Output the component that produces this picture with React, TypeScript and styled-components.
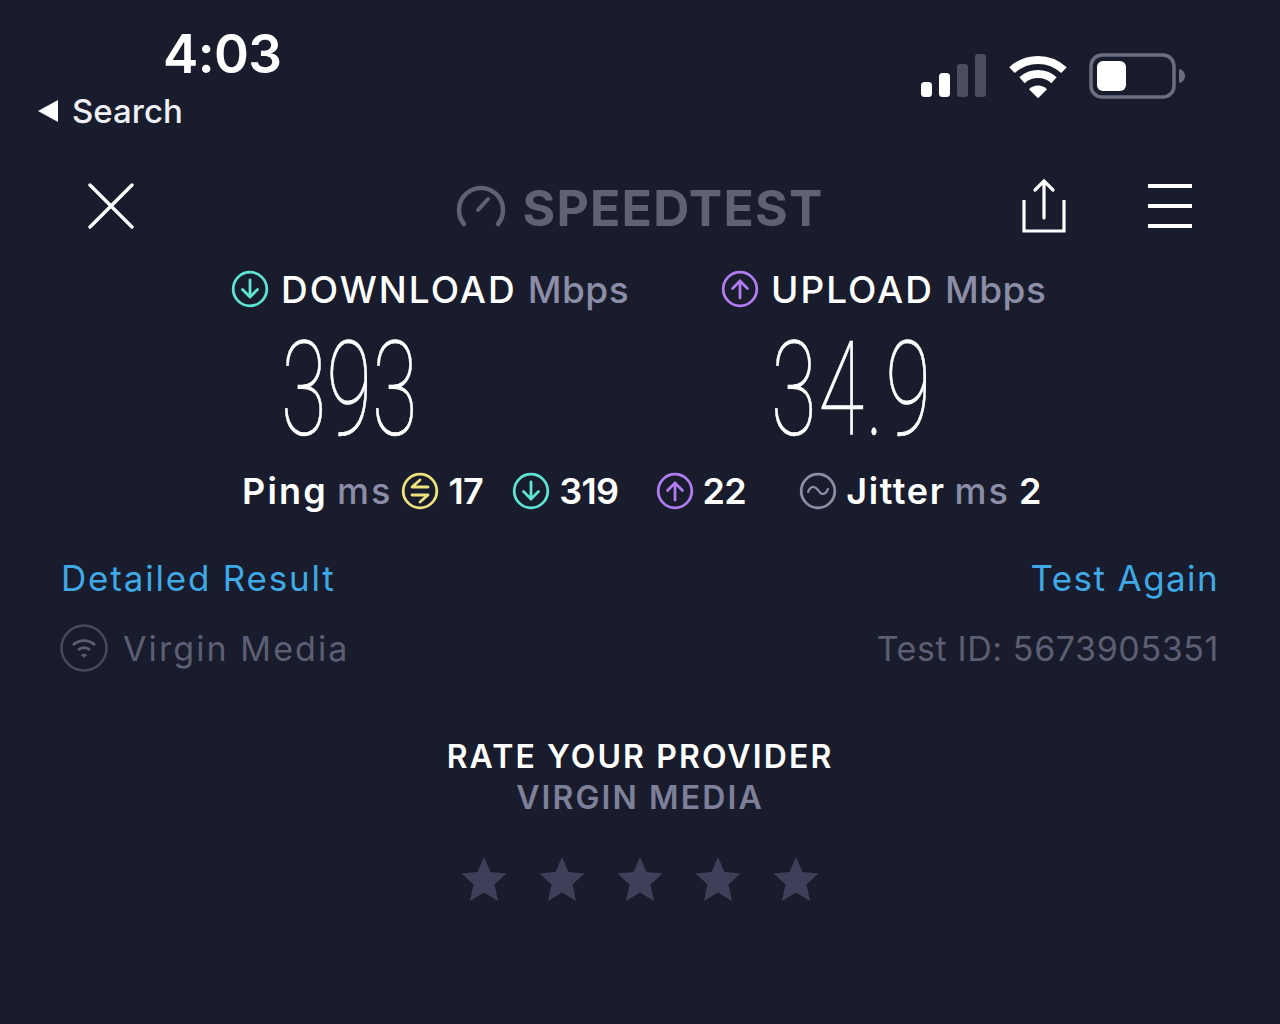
import { ReactNode } from "react";
import styled, { createGlobalStyle } from "styled-components";

const TEAL = "#5fe3d3";
const PURPLE = "#b07cf0";
const YELLOW = "#ede27e";
const MUTED = "#8b8ea6";
const BLUE = "#3fa9e6";
const DIM = "#5c5f73";

const GlobalStyle = createGlobalStyle`
  html, body {
    margin: 0;
    background: #191c2c;
  }
  body {
    font-family: Inter, "Liberation Sans", sans-serif;
    color: #fff;
  }
`;

const Page = styled.main`
  width: 1280px;
  height: 1024px;
  overflow: hidden;
  background: #191c2c;
`;

const StatusBar = styled.header`
  display: flex;
  justify-content: space-between;
  align-items: flex-end;
  height: 135px;
  padding: 0 95px 0 38px;
`;
const StatusLeft = styled.div`
  display: flex;
  flex-direction: column;
  align-self: flex-start;
`;
const Clock = styled.div`
  margin: 24px 0 0 125px;
  font-size: 53px;
  font-weight: 600;
  line-height: 60px;
  letter-spacing: -0.6px;
`;
const BackLink = styled.div`
  display: flex;
  align-items: center;
  gap: 14px;
  height: 47px;
  margin-top: 3px;
  font-size: 33px;
  font-weight: 500;
  color: #eef0f6;
`;
const StatusRight = styled.div`
  display: flex;
  align-items: center;
  gap: 22px;
  margin-bottom: 36px;
`;

const NavBar = styled.nav`
  display: grid;
  grid-template-columns: 1fr auto 1fr;
  align-items: center;
  height: 56px;
  margin-top: 43px;
  padding: 0 88px;
`;
const Logo = styled.div`
  display: flex;
  align-items: center;
  gap: 16px;
  color: #5f6274;
`;
const LogoText = styled.span`
  margin-top: 4px;
  font-size: 50px;
  font-weight: 700;
  line-height: 1;
  letter-spacing: 1.2px;
`;
const NavActions = styled.div`
  display: flex;
  justify-content: flex-end;
  align-items: center;
  gap: 82px;
`;

const Metrics = styled.section`
  display: grid;
  grid-template-columns: 490px auto;
  margin-top: 35px;
  padding-left: 231px;
`;
const Metric = styled.div`
  display: flex;
  flex-direction: column;
`;
const MetricHead = styled.div`
  display: flex;
  align-items: center;
  height: 40px;
  gap: 12px;
  font-size: 37px;
  font-weight: 500;
  letter-spacing: 2px;
`;
const Unit = styled.span`
  margin-left: -1px;
  font-weight: 500;
  letter-spacing: 0.5px;
  color: ${MUTED};
`;
const Reading = styled.div<{ $indent: number; $track?: number }>`
  height: 112px;
  margin: 25px 0 0 ${(p) => p.$indent}px;
  font-family: Roboto, sans-serif;
  font-size: 132px;
  font-weight: 100;
  line-height: 112px;
  letter-spacing: ${(p) => p.$track ?? 0}px;
  white-space: nowrap;
  -webkit-text-stroke: 0.7px #fff;
  transform: scaleX(0.63);
  transform-origin: left center;
`;

const Stats = styled.section`
  display: flex;
  align-items: center;
  height: 40px;
  margin-top: 25px;
  padding-left: 242px;
  font-size: 36px;
  font-weight: 600;
  letter-spacing: -0.6px;
`;
const Stat = styled.div<{ $gap: number }>`
  display: flex;
  align-items: center;
  gap: 9px;
  margin-left: ${(p) => p.$gap}px;
`;
const StatLabel = styled.span<{ $track: number }>`
  letter-spacing: ${(p) => p.$track}px;
`;
const StatUnit = styled.span`
  font-weight: 500;
  letter-spacing: 2px;
  color: ${MUTED};
`;

const InfoRow = styled.div<{ $top: number }>`
  display: flex;
  justify-content: space-between;
  align-items: center;
  height: 48px;
  margin-top: ${(p) => p.$top}px;
  padding: 0 61px;
`;
const TextLink = styled.a<{ $track: number }>`
  font-size: 35px;
  font-weight: 400;
  letter-spacing: ${(p) => p.$track}px;
  color: ${BLUE};
`;
const Provider = styled.div`
  display: flex;
  align-items: center;
  gap: 15px;
  margin-left: -1px;
`;
const FaintText = styled.span<{ $track: number }>`
  font-size: 34px;
  font-weight: 400;
  letter-spacing: ${(p) => p.$track}px;
  color: ${DIM};
`;

const Rating = styled.section`
  display: flex;
  flex-direction: column;
  align-items: center;
  margin-top: 64px;
`;
const RatingTitle = styled.div<{ $muted?: boolean }>`
  font-size: 32px;
  font-weight: 600;
  line-height: 41px;
  letter-spacing: 2.1px;
  color: ${(p) => (p.$muted ? "#7d8098" : "#fff")};
`;
const Stars = styled.div`
  display: flex;
  gap: 32px;
  margin-top: 38px;
`;

const SignalBars = () => (
  <svg width="66" height="44" viewBox="0 0 66 44">
    <rect x="0" y="28" width="11" height="15" rx="3.5" fill="#fff" />
    <rect x="18" y="19" width="11" height="24" rx="3.5" fill="#fff" />
    <rect x="36" y="10" width="11" height="33" rx="3" fill="#4b4e60" />
    <rect x="54" y="0" width="11" height="43" rx="3" fill="#4b4e60" />
  </svg>
);

const WifiIcon = ({ size, color }: { size: number; color: string }) => (
  <svg width={size} height={size * 0.8} viewBox="0 0 58 46">
    <path d="M3 17 A38 38 0 0 1 55 17" fill="none" stroke={color} strokeWidth="8" />
    <path d="M13 27 A24 24 0 0 1 45 27" fill="none" stroke={color} strokeWidth="8" />
    <path d="M20 36 A13 13 0 0 1 38 36 L29 45 Z" fill={color} />
  </svg>
);

const Battery = () => (
  <svg width="96" height="46" viewBox="0 0 96 46">
    <rect x="2" y="2" width="83" height="42" rx="11" fill="none" stroke="#6b6e80" strokeWidth="3.5" />
    <rect x="8" y="8" width="29" height="30" rx="6" fill="#fff" />
    <path d="M90 16 C94 17 96 20 96 23 C96 26 94 29 90 30 Z" fill="#6b6e80" />
  </svg>
);

const CloseIcon = () => (
  <svg width="46" height="46" viewBox="0 0 46 46">
    <path d="M2 2 L44 44 M44 2 L2 44" stroke="#fff" strokeWidth="3.4" strokeLinecap="round" />
  </svg>
);

const GaugeIcon = () => (
  <svg width="50" height="44" viewBox="0 0 50 44" fill="none" stroke="#5f6274" strokeLinecap="round">
    <path d="M8 40 A22 22 0 1 1 42 40" strokeWidth="4.5" />
    <path d="M22 26 L32 15" strokeWidth="4" />
  </svg>
);

const ShareIcon = () => (
  <svg width="44" height="56" viewBox="0 0 44 56" fill="none" stroke="#fff" strokeWidth="3.2">
    <path d="M2 22 V53 H42 V22" />
    <path d="M22 40 V3 M13 12 L22 3 L31 12" strokeLinecap="round" />
  </svg>
);

const MenuIcon = () => (
  <svg width="44" height="44" viewBox="0 0 44 44" fill="#fff">
    <rect y="0" width="44" height="4" />
    <rect y="20" width="44" height="4" />
    <rect y="40" width="44" height="4" />
  </svg>
);

const Ring = ({ color, children }: { color: string; children: ReactNode }) => (
  <svg width="38" height="38" viewBox="0 0 38 38" fill="none" stroke={color} strokeLinecap="round">
    <circle cx="19" cy="19" r="16.8" strokeWidth="2.8" />
    {children}
  </svg>
);

const DownIcon = () => (
  <Ring color={TEAL}>
    <path d="M19 10 V27 M11.5 19.5 L19 27 L26.5 19.5" strokeWidth="2.8" />
  </Ring>
);
const UpIcon = () => (
  <Ring color={PURPLE}>
    <path d="M19 28 V11 M11.5 18.5 L19 11 L26.5 18.5" strokeWidth="2.8" />
  </Ring>
);
const PingIcon = () => (
  <Ring color={YELLOW}>
    <path d="M27 15 H11 L19 8 M11 23 H27 L19 30" strokeWidth="2.8" strokeLinejoin="round" />
  </Ring>
);
const JitterIcon = () => (
  <Ring color={MUTED}>
    <path d="M9 20 C12 13 16 14 19 18 C22 23 26 24 29 17" strokeWidth="2.2" />
  </Ring>
);

const ProviderIcon = () => (
  <svg width="48" height="48" viewBox="0 0 48 48" fill="none" stroke="#474a5d">
    <circle cx="24" cy="24" r="22.5" strokeWidth="2.4" />
    <path d="M13 21 A16 16 0 0 1 35 21 M18 26 A9 9 0 0 1 30 26" strokeWidth="2.8" stroke="#5c5f73" />
    <path d="M21 31 A4 4 0 0 1 27 31 L24 34 Z" fill="#5c5f73" stroke="none" />
  </svg>
);

const Star = () => (
  <svg width="46" height="46" viewBox="0 0 46 46" fill="#3d4058">
    <path d="M23 1 L29.5 16 L45.5 17.5 L33.5 28.5 L37 45 L23 36.5 L9 45 L12.5 28.5 L0.5 17.5 L16.5 16 Z" />
  </svg>
);

export default function App() {
  return (
    <Page>
      <GlobalStyle />
      <StatusBar>
        <StatusLeft>
          <Clock>4:03</Clock>
          <BackLink>
            <svg width="20" height="22" viewBox="0 0 20 22" fill="#fff">
              <path d="M20 0 V22 L0 11 Z" />
            </svg>
            Search
          </BackLink>
        </StatusLeft>
        <StatusRight>
          <SignalBars />
          <WifiIcon size={58} color="#fff" />
          <Battery />
        </StatusRight>
      </StatusBar>

      <NavBar>
        <CloseIcon />
        <Logo>
          <GaugeIcon />
          <LogoText>SPEEDTEST</LogoText>
        </Logo>
        <NavActions>
          <ShareIcon />
          <MenuIcon />
        </NavActions>
      </NavBar>

      <Metrics>
        <Metric>
          <MetricHead>
            <DownIcon />
            DOWNLOAD <Unit>Mbps</Unit>
          </MetricHead>
          <Reading $indent={50}>393</Reading>
        </Metric>
        <Metric>
          <MetricHead>
            <UpIcon />
            UPLOAD <Unit>Mbps</Unit>
          </MetricHead>
          <Reading $indent={50} $track={3}>
            34.9
          </Reading>
        </Metric>
      </Metrics>

      <Stats>
        <Stat $gap={0}>
          <StatLabel $track={2.2}>Ping</StatLabel>
          <StatUnit>ms</StatUnit>
          <PingIcon />
          17
        </Stat>
        <Stat $gap={29}>
          <DownIcon />
          319
        </Stat>
        <Stat $gap={37}>
          <UpIcon />
          22
        </Stat>
        <Stat $gap={53}>
          <JitterIcon />
          <StatLabel $track={1.6}>Jitter</StatLabel>
          <StatUnit>ms</StatUnit>
          2
        </Stat>
      </Stats>

      <InfoRow $top={43}>
        <TextLink $track={1.8}>Detailed Result</TextLink>
        <TextLink $track={1.4}>Test Again</TextLink>
      </InfoRow>
      <InfoRow $top={22}>
        <Provider>
          <ProviderIcon />
          <FaintText $track={2.1}>Virgin Media</FaintText>
        </Provider>
        <FaintText $track={0.6}>Test ID: 5673905351</FaintText>
      </InfoRow>

      <Rating>
        <RatingTitle>RATE YOUR PROVIDER</RatingTitle>
        <RatingTitle $muted>VIRGIN MEDIA</RatingTitle>
        <Stars>
          {[0, 1, 2, 3, 4].map((i) => (
            <Star key={i} />
          ))}
        </Stars>
      </Rating>
    </Page>
  );
}
